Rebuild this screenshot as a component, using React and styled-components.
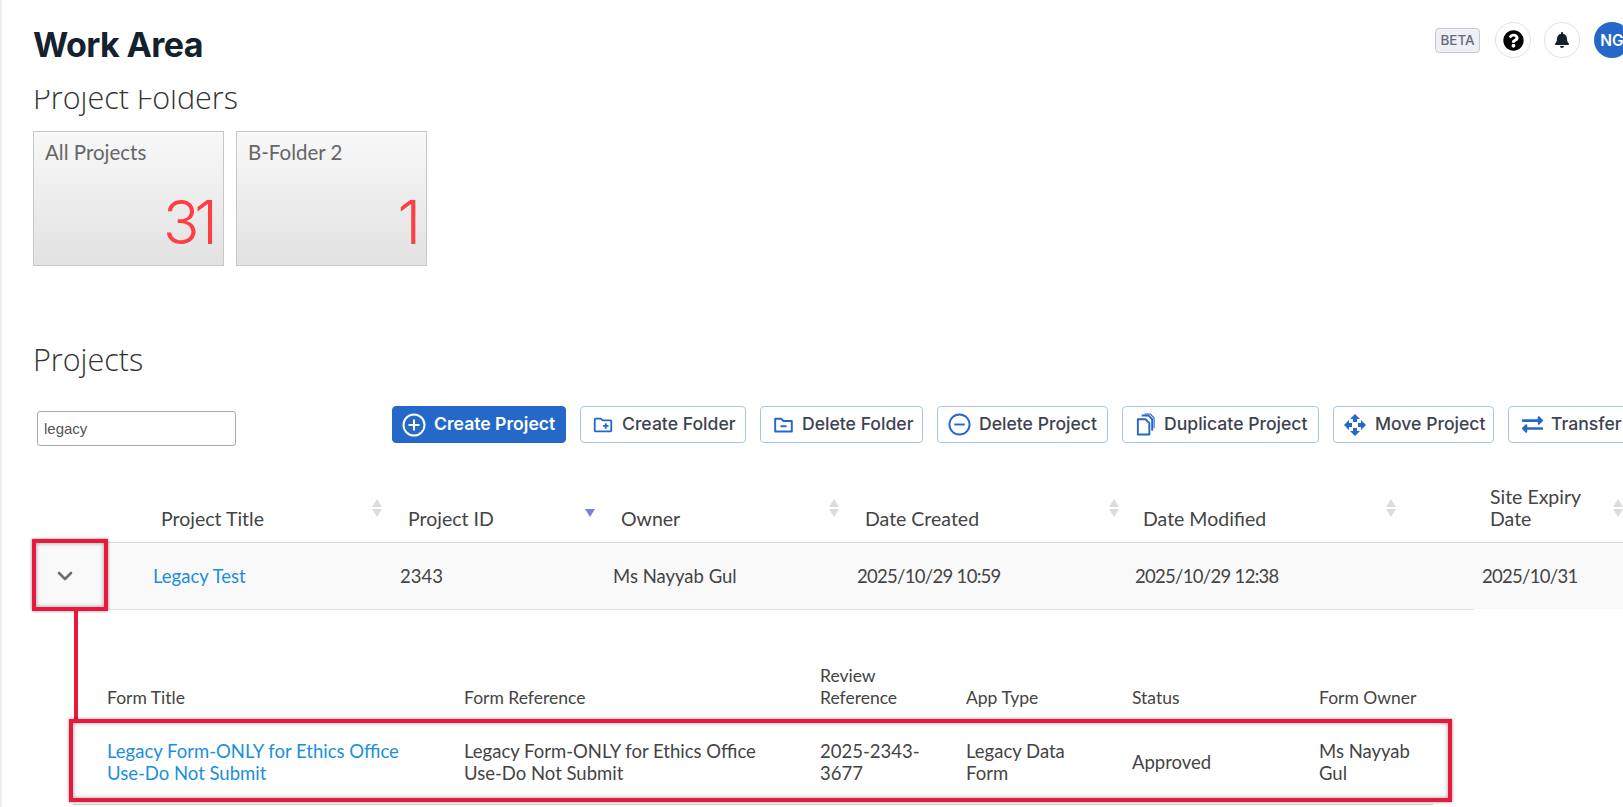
import React from "react";
import styled, { createGlobalStyle } from "styled-components";
import { MdOutlineCreateNewFolder, MdOpenWith } from "react-icons/md";
import { FaExchangeAlt, FaQuestionCircle, FaBell } from "react-icons/fa";
import { ChevronDown } from "lucide-react";

const Global = createGlobalStyle`
  html, body { margin: 0; padding: 0; background: #fff; }
  body { font-family: Inter, "Liberation Sans", sans-serif; overflow: hidden; }
  * { box-sizing: border-box; }
`;

const Page = styled.div`
  position: relative;
  width: 1623px;
  height: 807px;
  overflow: hidden;
  border-left: 2px solid #eeeeee;
  background: #fff;
`;

const Header = styled.header`
  height: 90px;
  display: flex;
  align-items: flex-start;
  justify-content: space-between;
  padding: 23px 0 0 31px;
`;

const Title = styled.h1`
  margin: 0;
  font: 700 34px/44px Inter, sans-serif;
  letter-spacing: -0.6px;
  color: #14212e;
`;

const HeaderTools = styled.div`
  display: flex;
  align-items: center;
  gap: 13px;
  margin: -1px -7px 0 0;
  height: 36px;
`;

const Beta = styled.span`
  width: 45px;
  height: 25px;
  margin-right: 2px;
  display: flex;
  align-items: center;
  justify-content: center;
  background: #eef0f4;
  border: 1px solid #c5c9d1;
  border-radius: 4px;
  font: 500 13.5px Inter, sans-serif;
  color: #5f6b7e;
`;

const RoundButton = styled.span`
  width: 36px;
  height: 36px;
  border: 1px solid #dfe3e8;
  border-radius: 50%;
  display: flex;
  align-items: center;
  justify-content: center;
  color: ${(p) => p.$color || "#000"};
  font-size: ${(p) => p.$size || 21}px;
`;

const Avatar = styled.span`
  width: 36px;
  height: 36px;
  margin-left: 1px;
  border-radius: 50%;
  background: #2468c8;
  color: #fff;
  display: flex;
  align-items: center;
  justify-content: center;
  font: 600 15.5px Inter, sans-serif;
`;

const Main = styled.main`
  padding-left: 31px;
  height: 717px;
  overflow: hidden;
`;

const SectionTitle = styled.h2`
  margin: ${(p) => p.$margin};
  font: 300 30.5px/36px "Open Sans", sans-serif;
  color: #333;
`;

const Folders = styled.div`
  display: flex;
  gap: 12px;
  margin-top: 16px;
`;

const FolderCard = styled.div`
  width: 191px;
  height: 135px;
  padding: 8px 10px 0 11px;
  border: 1px solid #c8c8c8;
  background: linear-gradient(#f8f8f8, #e2e2e2);
  display: flex;
  flex-direction: column;
  justify-content: space-between;
`;

const FolderName = styled.span`
  font: 400 20.5px/24px Lato, sans-serif;
  color: #666;
`;

const FolderCount = styled.span`
  align-self: flex-end;
  font: 300 60px/72px Inter, sans-serif;
  letter-spacing: -5px;
  color: #fb3f44;
  margin-bottom: 7px;
`;

const Toolbar = styled.div`
  display: flex;
  align-items: center;
  margin-top: 29px;
  height: 37px;
`;

const Search = styled.input`
  width: 199px;
  height: 35px;
  margin: 8px 0 0 4px;
  padding: 0 6px;
  border: 1px solid #a9a9a9;
  border-radius: 3px;
  font: 400 15px "Liberation Sans", sans-serif;
  color: #555;
  outline: none;
`;

const Actions = styled.div`
  display: flex;
  gap: 14px;
  margin-left: 156px;
  flex: none;
`;

const Action = styled.button`
  height: 37px;
  width: ${(p) => p.$width}px;
  display: flex;
  align-items: center;
  gap: 8px;
  padding: 0 0 3px ${(p) => p.$pad}px;
  border-radius: 4px;
  border: 1px solid ${(p) => (p.$primary ? "#2468c8" : "#a8c4ee")};
  background: ${(p) => (p.$primary ? "#2468c8" : "#fff")};
  color: ${(p) => (p.$primary ? "#fff" : "#3d4350")};
  font: ${(p) => (p.$primary ? 600 : 500)} 17.6px Inter, sans-serif;
  white-space: nowrap;
  flex: none;
  svg { flex: none; margin-top: 3px; color: ${(p) => (p.$primary ? "#fff" : "#2468c8")}; }
`;

const ProjectTable = styled.table`
  border-collapse: collapse;
  table-layout: fixed;
  width: 1641px;
  margin-top: 24px;
`;

const Th = styled.th`
  position: relative;
  height: 75px;
  vertical-align: bottom;
  text-align: left;
  padding: 0 ${(p) => p.$right || 20}px 12px ${(p) => (p.$first ? 0 : 16)}px;
  font: 400 19.5px/22px Lato, sans-serif;
  color: #444;
  border-bottom: 1px solid #dcdcdc;
`;

const Sort = styled.svg`
  position: absolute;
  top: 32px;
  right: ${(p) => p.$right}px;
  width: 10px;
  height: 18px;
`;

const Td = styled.td`
  height: 67px;
  padding: 0 8px;
  background: #f9f9f9;
  font: 400 18.5px/24px Lato, sans-serif;
  letter-spacing: ${(p) => (p.$numeric ? "-0.7px" : "0")};
  color: #444;
  border-bottom: ${(p) => (p.$last ? "0" : "1px solid #e2e2e2")};
`;

const ExpandIcon = styled(ChevronDown)`
  display: block;
  margin: 0 0 0 12px;
  color: #6e6e6e;
`;

const Link = styled.a`
  color: #1b8fdc;
  text-decoration: none;
`;

const FormTable = styled.table`
  border-collapse: collapse;
  table-layout: fixed;
  width: 1360px;
  margin: 46px 0 0 40px;
`;

const FormTh = styled.th`
  height: 65px;
  vertical-align: bottom;
  text-align: left;
  padding: 0 8px 12px ${(p) => p.$pad || 8}px;
  font: 400 17.5px/22px Lato, sans-serif;
  color: #444;
`;

const FormTd = styled.td`
  height: 84px;
  padding: 0 ${(p) => p.$right || 24}px 0 ${(p) => p.$pad || 8}px;
  font: 400 18.5px/22px Lato, sans-serif;
  color: #444;
  border-bottom: 1px solid #cfcfcf;
`;

const Callout = styled.div`
  position: absolute;
  left: ${(p) => p.$x}px;
  top: ${(p) => p.$y}px;
  width: ${(p) => p.$w}px;
  height: ${(p) => p.$h}px;
  border: 4px solid #e8193c;
  box-shadow: 0 0 3px rgba(0, 0, 0, 0.45), inset 0 0 4px rgba(0, 0, 0, 0.4);
  pointer-events: none;
`;

const Connector = styled.div`
  position: absolute;
  left: 72px;
  top: 611px;
  width: 4px;
  height: 110px;
  background: #e8193c;
`;

const SortArrows = ({ right, active }) => (
  <Sort $right={right} viewBox="0 0 10 18">
    {!active && <path d="M5 0 L10 8 L0 8 Z" fill="#dcdcdc" />}
    <path d="M0 10 L10 10 L5 18 Z" fill={active ? "#7b7fdc" : "#dcdcdc"} />
  </Sort>
);

const PlusCircle = () => (
  <svg width="24" height="24" viewBox="0 0 24 24" fill="none" stroke="currentColor" strokeWidth="2">
    <circle cx="12" cy="12" r="10.5" />
    <path d="M12 6.5v11M6.5 12h11" />
  </svg>
);

const MinusCircle = () => (
  <svg width="23" height="23" viewBox="0 0 24 24" fill="none" stroke="currentColor" strokeWidth="2">
    <circle cx="12" cy="12" r="10.5" />
    <path d="M6.5 12h11" />
  </svg>
);

const FolderMinus = () => (
  <svg width="21" height="21" viewBox="0 0 24 24" fill="none" stroke="currentColor" strokeWidth="2.2" strokeLinejoin="round">
    <path d="M2.5 5.5h7l2.5 2.5h9.5v12h-19z" />
    <path d="M8.5 14h7" />
  </svg>
);

const Duplicate = () => (
  <svg width="21" height="23" viewBox="0 0 22 24" fill="none" stroke="currentColor" strokeWidth="2" strokeLinejoin="round">
    <path d="M3 6.5h8l4 4v12H3z" />
    <path d="M7 2.5h7l4 4v12" />
    <path d="M10 1h6l4 4v11" strokeWidth="1.2" />
  </svg>
);

const projectColumns = [112, 247, 213, 244, 278, 347, 200];
const formColumns = [383, 356, 146, 166, 187, 122];

export default function App() {
  return (
    <Page>
      <Global />
      <Header>
        <Title>Work Area</Title>
        <HeaderTools>
          <Beta>BETA</Beta>
          <RoundButton><FaQuestionCircle /></RoundButton>
          <RoundButton $color="#14212e" $size={16}><FaBell /></RoundButton>
          <Avatar>NG</Avatar>
        </HeaderTools>
      </Header>
      <Main>
        <SectionTitle $margin="-11px 0 0 0">Project Folders</SectionTitle>
        <Folders>
          <FolderCard>
            <FolderName>All Projects</FolderName>
            <FolderCount>31</FolderCount>
          </FolderCard>
          <FolderCard>
            <FolderName>B-Folder 2</FolderName>
            <FolderCount>1</FolderCount>
          </FolderCard>
        </Folders>
        <SectionTitle $margin="75px 0 0 0">Projects</SectionTitle>
        <Toolbar>
          <Search defaultValue="legacy" />
          <Actions>
            <Action $primary $width={174} $pad={9}><PlusCircle />Create Project</Action>
            <Action $width={166} $pad={11}><MdOutlineCreateNewFolder size={22} />Create Folder</Action>
            <Action $width={163} $pad={12}><FolderMinus />Delete Folder</Action>
            <Action $width={171} $pad={10}><MinusCircle />Delete Project</Action>
            <Action $width={197} $pad={12}><Duplicate />Duplicate Project</Action>
            <Action $width={161} $pad={9}><MdOpenWith size={24} />Move Project</Action>
            <Action $width={200} $pad={13}><FaExchangeAlt size={21} />Transfer</Action>
          </Actions>
        </Toolbar>
        <ProjectTable>
          <colgroup>
            {projectColumns.map((w, i) => <col key={i} width={w} />)}
          </colgroup>
          <thead>
            <tr>
              <Th $first />
              <Th>Project Title<SortArrows right={10} /></Th>
              <Th>Project ID<SortArrows right={10} active /></Th>
              <Th>Owner<SortArrows right={10} /></Th>
              <Th>Date Created<SortArrows right={8} /></Th>
              <Th>Date Modified<SortArrows right={78} /></Th>
              <Th $right={70}>Site Expiry Date<SortArrows right={51} /></Th>
            </tr>
          </thead>
          <tbody>
            <tr>
              <Td><ExpandIcon size={24} strokeWidth={2.6} /></Td>
              <Td><Link>Legacy Test</Link></Td>
              <Td>2343</Td>
              <Td>Ms Nayyab Gul</Td>
              <Td $numeric>2025/10/29 10:59</Td>
              <Td $numeric>2025/10/29 12:38</Td>
              <Td $numeric $last>2025/10/31</Td>
            </tr>
          </tbody>
        </ProjectTable>
        <FormTable>
          <colgroup>
            {formColumns.map((w, i) => <col key={i} width={w} />)}
          </colgroup>
          <thead>
            <tr>
              <FormTh $pad={34}>Form Title</FormTh>
              <FormTh>Form Reference</FormTh>
              <FormTh>Review Reference</FormTh>
              <FormTh>App Type</FormTh>
              <FormTh>Status</FormTh>
              <FormTh>Form Owner</FormTh>
            </tr>
          </thead>
          <tbody>
            <tr>
              <FormTd $pad={34}><Link>Legacy Form-ONLY for Ethics Office Use-Do Not Submit</Link></FormTd>
              <FormTd>Legacy Form-ONLY for Ethics Office Use-Do Not Submit</FormTd>
              <FormTd>2025-2343-3677</FormTd>
              <FormTd>Legacy Data Form</FormTd>
              <FormTd>Approved</FormTd>
              <FormTd $right={8}>Ms Nayyab Gul</FormTd>
            </tr>
          </tbody>
        </FormTable>
      </Main>
      <Callout $x={30} $y={539} $w={76} $h={72} />
      <Connector />
      <Callout $x={67} $y={719} $w={1383} $h={83} />
    </Page>
  );
}
